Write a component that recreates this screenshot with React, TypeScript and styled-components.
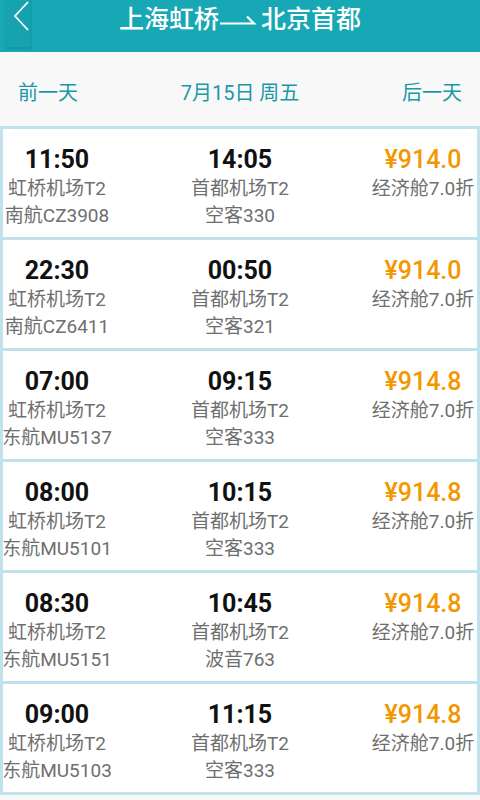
import styled, { createGlobalStyle } from 'styled-components';

type Flight = {
  depart: string;
  arrive: string;
  from: string;
  to: string;
  flightNo: string;
  plane: string;
  price: string;
  cabin: string;
};

const FLIGHTS: Flight[] = [
  { depart: '11:50', arrive: '14:05', from: '虹桥机场T2', to: '首都机场T2', flightNo: '南航CZ3908', plane: '空客330', price: '¥914.0', cabin: '经济舱7.0折' },
  { depart: '22:30', arrive: '00:50', from: '虹桥机场T2', to: '首都机场T2', flightNo: '南航CZ6411', plane: '空客321', price: '¥914.0', cabin: '经济舱7.0折' },
  { depart: '07:00', arrive: '09:15', from: '虹桥机场T2', to: '首都机场T2', flightNo: '东航MU5137', plane: '空客333', price: '¥914.8', cabin: '经济舱7.0折' },
  { depart: '08:00', arrive: '10:15', from: '虹桥机场T2', to: '首都机场T2', flightNo: '东航MU5101', plane: '空客333', price: '¥914.8', cabin: '经济舱7.0折' },
  { depart: '08:30', arrive: '10:45', from: '虹桥机场T2', to: '首都机场T2', flightNo: '东航MU5151', plane: '波音763', price: '¥914.8', cabin: '经济舱7.0折' },
  { depart: '09:00', arrive: '11:15', from: '虹桥机场T2', to: '首都机场T2', flightNo: '东航MU5103', plane: '空客333', price: '¥914.8', cabin: '经济舱7.0折' },
];

const GlobalStyle = createGlobalStyle`
  html, body {
    margin: 0;
    padding: 0;
    background: #f8f8f8;
    font-family: Roboto, "Noto Sans CJK SC", sans-serif;
  }
  body {
    width: 480px;
    height: 800px;
    overflow: hidden;
  }
`;

const Page = styled.div`
  display: flex;
  flex-direction: column;
  width: 480px;
`;

const Header = styled.header`
  position: relative;
  display: flex;
  align-items: center;
  justify-content: center;
  height: 52px;
  background: #18a7b5;
  color: #fff;
`;

// sits over the header's left corner
const BackButton = styled.button`
  position: absolute;
  left: 6px;
  top: 0;
  width: 25px;
  height: 48px;
  padding: 0;
  border: none;
  border-right: 1px solid #1496a3;
  border-bottom: 1px solid #1496a3;
  background: #17a2af;
  box-shadow: 0 1px 2px rgba(0, 0, 0, 0.15);
  display: flex;
  align-items: flex-start;
  justify-content: flex-end;
`;

const Title = styled.h1`
  margin: 0 0 12px;
  display: flex;
  align-items: center;
  font-size: 25px;
  font-weight: 500;
  line-height: 30px;
`;

const DateBar = styled.nav`
  display: flex;
  align-items: center;
  justify-content: space-between;
  height: 74px;
  padding: 4px 18px 0 18px;
  box-sizing: border-box;
  background: #f8f8f8;
  color: #1b98a7;
  font-size: 20px;
`;

const DateLink = styled.span`
  cursor: pointer;
`;

const List = styled.div`
  display: flex;
  flex-direction: column;
  gap: 3px;
  padding: 3px;
  background: #c0e2ec;
`;

const Card = styled.div`
  display: grid;
  grid-template-columns: 108px 1fr 108px;
  height: 108px;
  padding: 16px 0 8px;
  box-sizing: border-box;
  background: #fff;
`;

const Column = styled.div`
  display: flex;
  flex-direction: column;
  align-items: center;
  white-space: nowrap;
`;

const Time = styled.div<{ $price?: boolean }>`
  height: 30px;
  line-height: 30px;
  font-size: 25px;
  font-weight: ${p => (p.$price ? 500 : 700)};
  color: ${p => (p.$price ? '#f39700' : '#111')};
`;

const Info = styled.div`
  height: 27px;
  line-height: 27px;
  font-size: 19px;
  color: #6f6f6f;
`;

const Arrow = () => (
  <svg width="42" height="20" viewBox="0 0 42 20">
    <path d="M1 13.5 H35 L28 6.5" fill="none" stroke="#fff" strokeWidth="2.2" />
  </svg>
);

const FlightCard = ({ f }: { f: Flight }) => (
  <Card>
    <Column>
      <Time>{f.depart}</Time>
      <Info>{f.from}</Info>
      <Info>{f.flightNo}</Info>
    </Column>
    <Column>
      <Time>{f.arrive}</Time>
      <Info>{f.to}</Info>
      <Info>{f.plane}</Info>
    </Column>
    <Column>
      <Time $price>{f.price}</Time>
      <Info>{f.cabin}</Info>
    </Column>
  </Card>
);

export default function App() {
  return (
    <Page>
      <GlobalStyle />
      <Header>
        <BackButton aria-label="返回">
          <svg width="17" height="34" viewBox="0 0 17 34">
            <path d="M15 2 L2 16 L15 30" fill="none" stroke="#fff" strokeWidth="1.8" />
          </svg>
        </BackButton>
        <Title>
          上海虹桥
          <Arrow />
          北京首都
        </Title>
      </Header>
      <DateBar>
        <DateLink>前一天</DateLink>
        <span>7月15日 周五</span>
        <DateLink>后一天</DateLink>
      </DateBar>
      <List>
        {FLIGHTS.map(f => (
          <FlightCard key={f.flightNo} f={f} />
        ))}
      </List>
    </Page>
  );
}
